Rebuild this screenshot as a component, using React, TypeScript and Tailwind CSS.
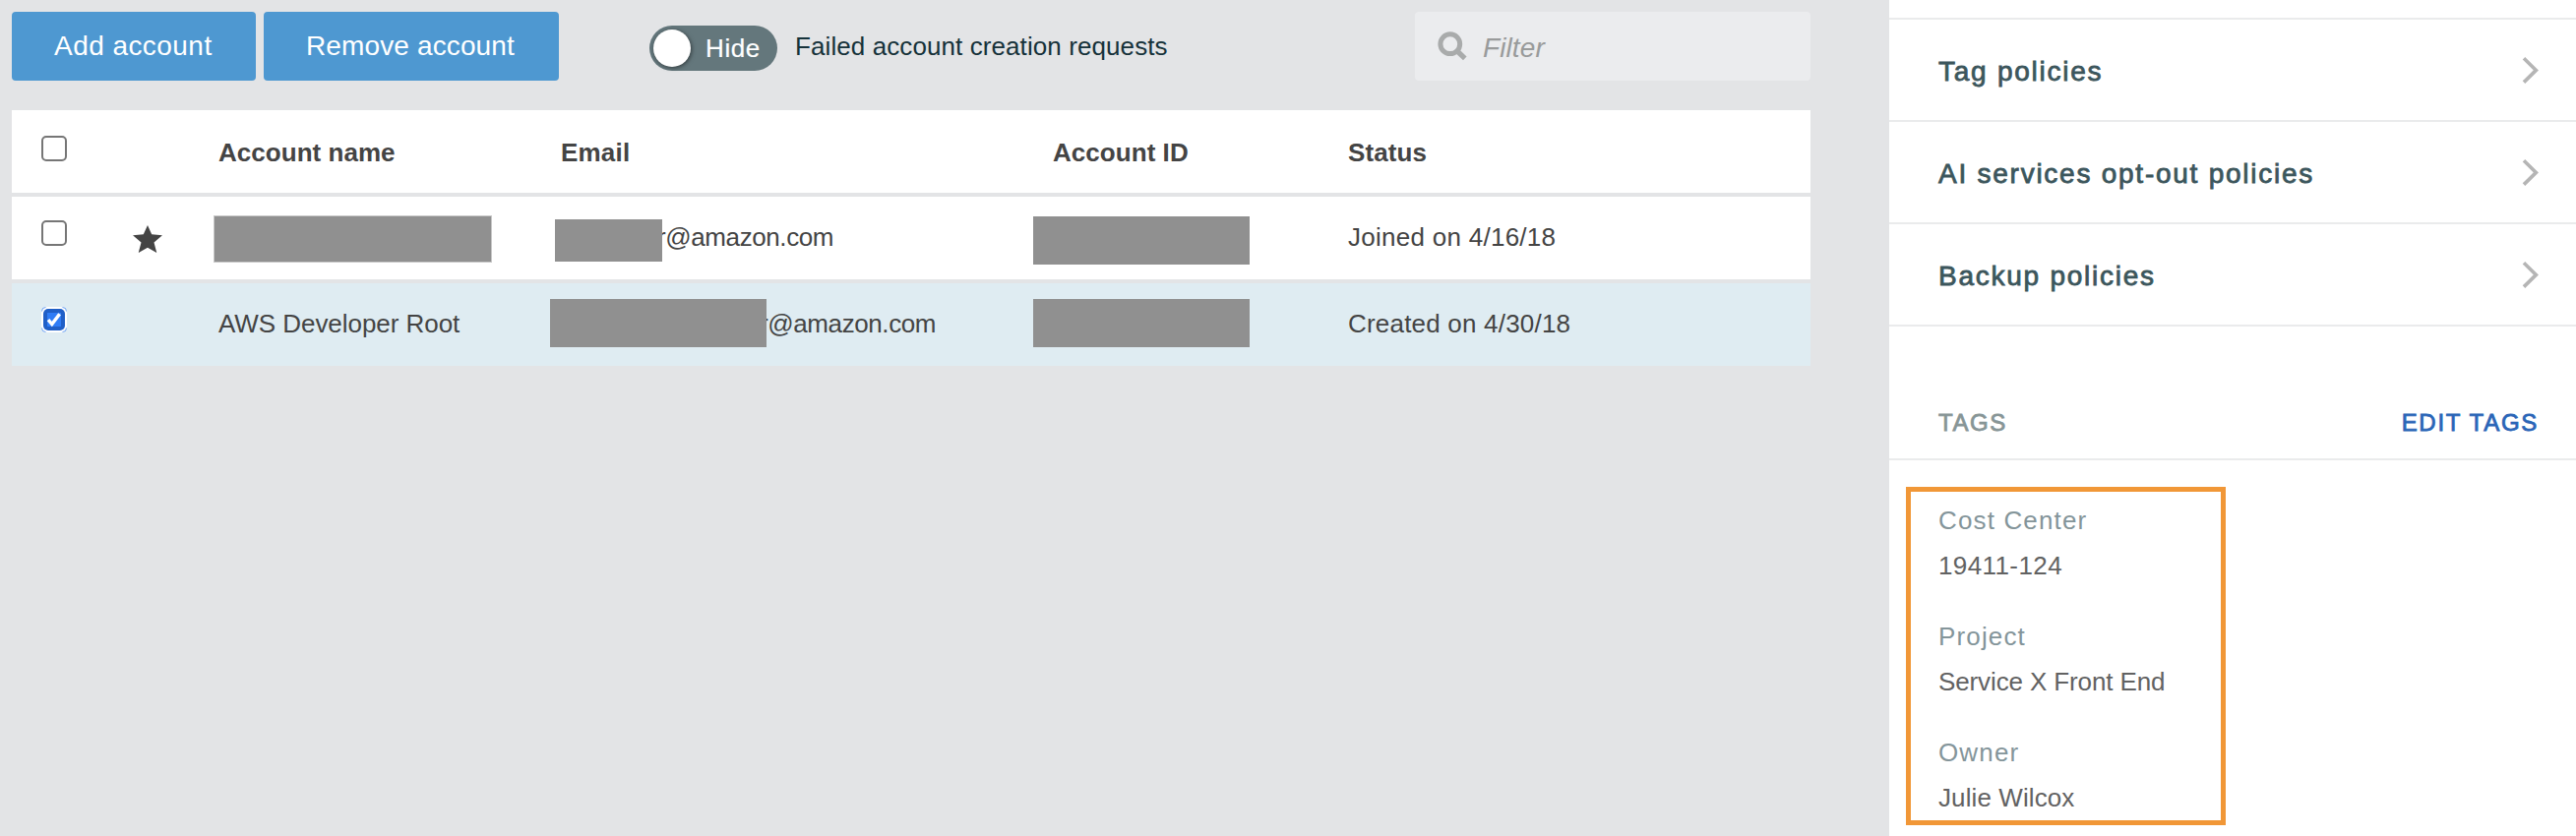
const Box = ({ checked = false }: { checked?: boolean }) =>
  checked ? (
    <svg className="block h-[26px] w-[26px]" viewBox="0 0 26 26">
      <rect x="0.5" y="0.5" width="25" height="25" rx="5" fill="#ffffff" stroke="#ffffff" />
      <path d="M0.5 4.5Q0.5 0.5 4.5 0.5M21.5 0.5Q25.5 0.5 25.5 4.5M25.5 21.5Q25.5 25.5 21.5 25.5M4.5 25.5Q0.5 25.5 0.5 21.5" fill="none" stroke="#6fa3f5" />
      <rect x="2" y="2" width="22" height="22" rx="5" fill="#205fc7" />
      <rect x="6" y="6" width="14" height="14" fill="#2f7cf6" />
      <path d="M7 13.2L10.8 17.6L18.6 7.2" fill="none" stroke="#ffffff" strokeWidth="3.4" />
    </svg>
  ) : (
    <span className="block h-[26px] w-[26px] rounded-[5px] border-2 border-[#767676] bg-white" />
  );

const rowGrid = "grid h-[84px] grid-cols-[123px_87px_348px_500px_300px_1fr] items-start";

const Chevron = () => (
  <svg className="h-7 w-[18px]" viewBox="0 0 18 28" fill="none" stroke="#b5b5b5" strokeWidth="3.6">
    <path d="M2 2.2L14.4 14.4L2 26.6" />
  </svg>
);

const policies = ["Tag policies", "AI services opt-out policies", "Backup policies"];

const tags = [
  { name: "Cost Center", value: "19411-124", spacing: "tracking-[0.4px]" },
  { name: "Project", value: "Service X Front End", spacing: "tracking-[-0.12px]" },
  { name: "Owner", value: "Julie Wilcox", spacing: "tracking-[0.1px]" },
];

function Accounts() {
  return (
    <main className="flex h-full w-[1920px] flex-col bg-[#e3e4e6] pt-3 pl-3">
      <div className="flex h-[70px] w-[1828px] items-center">
        <button className="mr-2 h-[70px] w-[248px] rounded-[4px] bg-[#4e98d1] pl-[43px] text-left text-[28px] leading-8 tracking-[0.45px] text-white">
          Add account
        </button>
        <button className="h-[70px] w-[300px] rounded-[4px] bg-[#4e98d1] pl-[43px] text-left text-[28px] leading-8 tracking-[0.13px] text-white">
          Remove account
        </button>
        <div className="mt-1 ml-[92px] flex h-[46px] w-[130px] items-center rounded-full bg-[#64777c] pl-1">
          <span className="h-[38px] w-[38px] rounded-full bg-white shadow-[1px_1px_4px_rgba(0,0,0,0.5)]" />
          <span className="ml-[15px] text-[26px] leading-8 tracking-[0.6px] text-white [-webkit-text-stroke:0.2px]">Hide</span>
        </div>
        <span className="ml-[18px] text-[26px] leading-8 tracking-[0.09px] text-[#16323a]">
          Failed account creation requests
        </span>
        <div className="ml-auto flex h-[70px] w-[402px] items-center rounded-[4px] bg-[#ebecee] pl-[23px]">
          <svg className="h-[30px] w-[30px]" viewBox="0 0 30 30" fill="none" stroke="#a9abab">
            <circle cx="12.8" cy="12.7" r="9.9" strokeWidth="5" />
            <path d="M19.5 19.5L27.8 27.4" strokeWidth="5.2" />
          </svg>
          <span className="mt-1 ml-[16px] text-[28px] leading-8 tracking-[0.1px] text-[#999b9b] italic">Filter</span>
        </div>
      </div>

      <div className="mt-[30px] flex w-[1828px] flex-col gap-1 text-[26px] leading-8 text-[#444444]">
        <div className={`${rowGrid} bg-white pt-[27px] font-bold`}>
          <div className="-mt-px pl-[30px]"><Box /></div>
          <span />
          <span className="tracking-[0.04px]">Account name</span>
          <span className="tracking-[0.2px]">Email</span>
          <span className="tracking-[0.05px]">Account ID</span>
          <span className="tracking-[0.1px]">Status</span>
        </div>
        <div className={`${rowGrid} bg-white pt-[25px]`}>
          <div className="-mt-px pl-[30px]"><Box /></div>
          <svg className="mt-1 h-[28px] w-[30px]" viewBox="0 0 30 28" fill="#444444">
            <path d="M15 0L19.2 9.3L30 10.3L21.5 17.6L24.3 28L15 22.8L5.7 28L8.5 17.6L0 10.3L10.8 9.3Z" />
          </svg>
          <div className="mt-[-6px] -ml-[5px] h-12 w-[283px] border border-[#c8c8c8] bg-[#909090]" />
          <div className="relative pl-[98px] tracking-[-0.4px]">
            r@amazon.com
            <div className="absolute top-[-2px] left-[-6px] h-[43px] w-[109px] bg-[#909090]" />
          </div>
          <div className="mt-[-5px] -ml-5 h-[49px] w-[220px] bg-[#909090]" />
          <span className="tracking-[0.27px]">Joined on 4/16/18</span>
        </div>
        <div className={`${rowGrid} bg-[#dfecf2] pt-[25px]`}>
          <div className="-mt-px pl-[30px]"><Box checked /></div>
          <span />
          <span className="tracking-[-0.05px]">AWS Developer Root</span>
          <div className="relative pl-[202px] tracking-[-0.4px]">
            r@amazon.com
            <div className="absolute top-[-9px] left-[-11px] h-[49px] w-[220px] bg-[#909090]" />
          </div>
          <div className="mt-[-9px] -ml-5 h-[49px] w-[220px] bg-[#909090]" />
          <span className="tracking-[0.2px]">Created on 4/30/18</span>
        </div>
      </div>
    </main>
  );
}

function Details() {
  return (
    <aside className="flex h-full flex-1 flex-col bg-white">
      <div className="h-[18px]" />
      {policies.map((label) => (
        <div key={label} className="flex h-[104px] items-center justify-between border-t-2 border-[#eaebec] pr-[37px] pl-[50px]">
          <span className="pt-[3px] text-[28px] leading-8 tracking-[1.75px] text-[#3c565c] [-webkit-text-stroke:0.8px]">{label}</span>
          <Chevron />
        </div>
      ))}
      <div className="flex h-[138px] items-end justify-between border-y-2 border-[#eaebec] pr-[38px] pb-[20px] pl-[50px] text-[24px] leading-8">
        <span className="tracking-[1.6px] text-[#879596] [-webkit-text-stroke:0.8px]">TAGS</span>
        <span className="tracking-[1.7px] text-[#2a65b7] [-webkit-text-stroke:0.8px]">EDIT TAGS</span>
      </div>
      <dl className="mt-[27px] ml-[17px] flex h-[344px] w-[325px] flex-col gap-10 border-[5px] border-[#f19737] pt-[13px] pl-[28px] text-[26px] leading-8">
        {tags.map((tag) => (
          <div key={tag.name} className="flex flex-col gap-[14px]">
            <dt className="tracking-[1.15px] text-[#84959a]">{tag.name}</dt>
            <dd className={`text-[#626262] ${tag.spacing}`}>{tag.value}</dd>
          </div>
        ))}
      </dl>
    </aside>
  );
}

export default function App() {
  return (
    <div className="flex h-[850px] w-[2618px] overflow-hidden font-['Liberation_Sans',Arial,sans-serif]">
      <Accounts />
      <Details />
    </div>
  );
}
